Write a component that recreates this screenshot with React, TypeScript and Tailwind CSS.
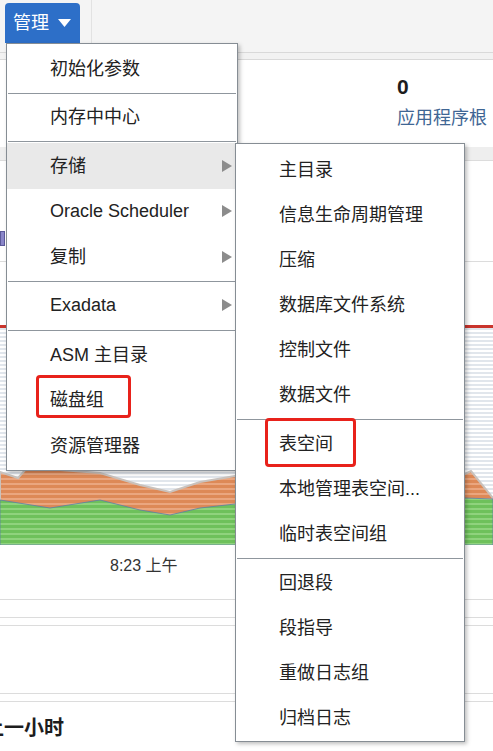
import React from "react";

type Item = { label: string; arrow?: boolean; active?: boolean; h?: string } | { sep: string };

const mainMenu: Item[] = [
  { label: "初始化参数" },
  { sep: "h-[3px]" },
  { label: "内存中中心" },
  { sep: "h-[3px]" },
  { label: "存储", arrow: true, active: true },
  { label: "Oracle Scheduler", arrow: true },
  { label: "复制", arrow: true },
  { sep: "h-[3px]" },
  { label: "Exadata", arrow: true },
  { sep: "h-[4px]" },
  { label: "ASM 主目录" },
  { label: "磁盘组" },
  { label: "资源管理器" },
];

const storageMenu: Item[] = [
  { label: "主目录" },
  { label: "信息生命周期管理" },
  { label: "压缩" },
  { label: "数据库文件系统" },
  { label: "控制文件" },
  { label: "数据文件" },
  { sep: "h-[4px]" },
  { label: "表空间" },
  { label: "本地管理表空间..." },
  { label: "临时表空间组" },
  { sep: "h-[4px]" },
  { label: "回退段" },
  { label: "段指导" },
  { label: "重做日志组" },
  { label: "归档日志" },
];

const Arrow = () => (
  <svg width="10" height="12" viewBox="0 0 10 12" className="absolute right-[5px]">
    <path d="M0 0 L10 6 L0 12 Z" fill="#8c8c8c" />
  </svg>
);

const MenuList = ({ items, rowH }: { items: Item[]; rowH: string }) => (
  <>
    {items.map((it, i) =>
      "sep" in it ? (
        <div key={i} className={`${it.sep} flex items-center px-[1px]`}>
          <div className="h-[1px] w-full bg-[#8f969d]" />
        </div>
      ) : (
        <div
          key={i}
          className={`${rowH} relative flex items-center pl-[43px] text-[18px] leading-none text-[#222] ${
            it.active ? "bg-[#e9e9e9]" : ""
          }`}
        >
          {it.label}
          {it.arrow && <Arrow />}
        </div>
      )
    )}
  </>
);

const Chart = () => (
  <svg width="493" height="217" viewBox="0 0 493 217" className="block">
    <defs>
      <pattern id="gs" width="4" height="4" patternUnits="userSpaceOnUse">
        <rect width="4" height="4" fill="#ffffff" />
        <rect width="4" height="2" fill="#e1e6ec" />
      </pattern>
      <pattern id="os" width="4" height="5" patternUnits="userSpaceOnUse">
        <rect width="4" height="5" fill="#dd8957" />
        <rect width="4" height="2" fill="#eaa67f" />
      </pattern>
      <pattern id="ns" width="4" height="5" patternUnits="userSpaceOnUse">
        <rect width="4" height="5" fill="#6ec15b" />
        <rect width="4" height="2" fill="#8fd37d" />
      </pattern>
    </defs>
    <rect width="493" height="217" fill="url(#gs)" />
    <path
      d="M0 144 L18 150 L26 141 L60 142 L100 145 L140 157 L170 164 L200 154 L235 148 L300 150 L400 150 L465 146 L471 143 L493 170 L493 217 L0 217 Z"
      fill="url(#os)"
      stroke="#c9c2bd"
      strokeWidth="2"
    />
    <path
      d="M0 172 L50 180 L100 172 L140 182 L170 187 L200 180 L235 176 L400 174 L465 170 L493 171 L493 217 L0 217 Z"
      fill="url(#ns)"
      stroke="#5b7fa8"
      strokeWidth="0.8"
    />
  </svg>
);

export default function App() {
  return (
    <div className="relative w-[493px] h-[751px] overflow-hidden bg-white font-[Liberation_Sans,Noto_Sans_CJK_SC,sans-serif]">
      {/* header */}
      <div className="h-[52px] bg-[#f4f4f4] flex">
        <div className="w-[92px] h-[45px] border-r border-[#e2e2e2] pl-[5px] pt-[3px]">
          <div className="w-[75px] h-[40px] bg-[#2d6fc8] rounded-t-[4px] flex items-center pl-[8px] gap-[9px] text-white text-[18px] leading-none">
            <span>管理</span>
            <svg width="13" height="8" viewBox="0 0 13 8">
              <path d="M0 0 H13 L6.5 8 Z" fill="#fff" />
            </svg>
          </div>
        </div>
      </div>
      <div className="h-[8px] bg-[#f2f2f2] border-y border-[#d9d9d9]" />
      <div className="h-[87px] flex flex-col pl-[397px] pt-[16px]">
        <div className="text-[21px] font-bold leading-none text-[#1d1d1d]">0</div>
        <div className="mt-[12px] text-[18px] leading-none text-[#3f6694]">应用程序根</div>
      </div>
      <div className="h-[14px] bg-[#eeeeee] border-b border-[#dcdcdc]" />
      <div className="h-[100px] relative">
        <div className="absolute left-0 top-[70px] w-[5px] h-[15px] bg-[#8a86c9] border border-[#5c5a9a]" />
      </div>
      <div className="h-[1px] bg-[#dcdcdc]" />
      <div className="h-[63px]" />
      <div className="h-[3px] bg-[#c9342c]" />
      <Chart />
      <div className="h-[54px] pl-[110px] pt-[13px] text-[16px] leading-none text-[#333]">8:23 上午</div>
      <div className="h-[1px] bg-[#dcdcdc]" />
      <div className="h-[17px]" />
      <div className="h-[1px] bg-[#dcdcdc]" />
      <div className="h-[7px]" />
      <div className="h-[1px] bg-[#dcdcdc]" />
      <div className="h-[67px]" />
      <div className="h-[1px] bg-[#dcdcdc]" />
      <div className="h-[7px]" />
      <div className="h-[1px] bg-[#dcdcdc]" />
      <div className="pt-[16px] text-[20px] font-bold leading-none text-[#1d1d1d] whitespace-nowrap ml-[-16px]">
        上一小时
      </div>

      {/* main dropdown */}
      <div className="absolute left-[6px] top-[43px] w-[232px] bg-white border border-[#868d94] shadow-[2px_2px_4px_rgba(0,0,0,0.25)] pt-[2px] pb-[1px]">
        <MenuList items={mainMenu} rowH="h-[45.5px]" />
      </div>

      {/* storage submenu */}
      <div className="absolute left-[235px] top-[143px] w-[230px] bg-white border border-[#868d94] shadow-[2px_2px_4px_rgba(0,0,0,0.25)] pt-[3px] pb-[1px]">
        <MenuList items={storageMenu} rowH="h-[45px]" />
      </div>

      {/* highlight boxes */}
      <div className="absolute left-[36px] top-[375px] w-[95px] h-[43px] border-[3px] border-[#e8221b] rounded-[4px]" />
      <div className="absolute left-[265px] top-[418px] w-[91px] h-[49px] border-[3px] border-[#e8221b] rounded-[4px]" />
    </div>
  );
}
